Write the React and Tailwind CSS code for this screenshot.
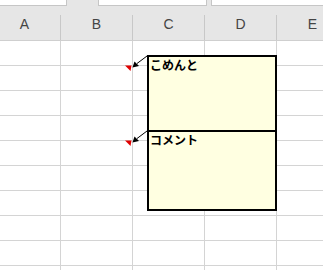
const columns = ["A", "B", "C", "D", "E"];
const rows = Array.from({ length: 10 }, (_, i) => i);

const App = () => {
    return (
        <div className="relative w-[323px] h-[270px] overflow-hidden bg-white font-['Liberation_Sans',sans-serif]">
            {/* sheet tabs strip */}
            <div className="flex h-[6px] bg-[#e6e6e6]">
                <div className="w-[67px] bg-white border-b border-r border-[#c6c6c6]" />
                <div className="w-[31px]" />
                <div className="w-[109px] bg-white border-b border-x border-[#c6c6c6]" />
                <div className="w-[4px]" />
                <div className="flex-1 bg-white border-b border-l border-[#c6c6c6]" />
            </div>

            {/* column headers */}
            <div className="flex h-[35px] ml-[-11px] bg-[#e6e6e6] border-b border-[#cfcfcf]">
                {columns.map((col) => (
                    <div key={col} className="flex w-[72px] shrink-0">
                        <div className="flex-1 flex items-center justify-center pt-[2px] text-[14px] text-[#444]">
                            {col}
                        </div>
                        <div className="w-px mt-[9px] bg-[#c8c8c8]" />
                    </div>
                ))}
            </div>

            {/* cells */}
            <div className="ml-[-11px]">
                {rows.map((r) => (
                    <div key={r} className="flex h-[25px]">
                        {columns.map((col) => (
                            <div
                                key={col}
                                className="w-[72px] shrink-0 border-r border-b border-[#d4d4d4]"
                            />
                        ))}
                    </div>
                ))}
            </div>

            {/* comment indicators + arrows */}
            <svg className="absolute left-0 top-0" width="323" height="270">
                <polygon points="125,65.5 131.5,65.5 130.5,71" fill="#e00000" />
                <line x1="147" y1="56" x2="137" y2="63.5" stroke="#000" strokeWidth="1" />
                <polygon points="132.5,67.5 134.5,61.5 139,66" fill="#000" />
                <polygon points="125,140.5 131.5,140.5 130.5,146" fill="#e00000" />
                <line x1="147" y1="131" x2="137" y2="138.5" stroke="#000" strokeWidth="1" />
                <polygon points="132.5,142.5 134.5,136.5 139,141" fill="#000" />
            </svg>

            {/* comment boxes */}
            <div className="absolute left-[147px] top-[55px] w-[130px] h-[77px] bg-[#ffffe1] border-2 border-black pl-[1px] pt-[1px] text-[12px] leading-[14px] font-bold text-black font-['Noto_Sans_CJK_JP',sans-serif]">
                こめんと
            </div>
            <div className="absolute left-[147px] top-[130px] w-[130px] h-[81px] bg-[#ffffe1] border-2 border-black pl-[1px] pt-[1px] text-[12px] leading-[14px] font-bold text-black font-['Noto_Sans_CJK_JP',sans-serif]">
                コメント
            </div>
        </div>
    );
};

export default App;
